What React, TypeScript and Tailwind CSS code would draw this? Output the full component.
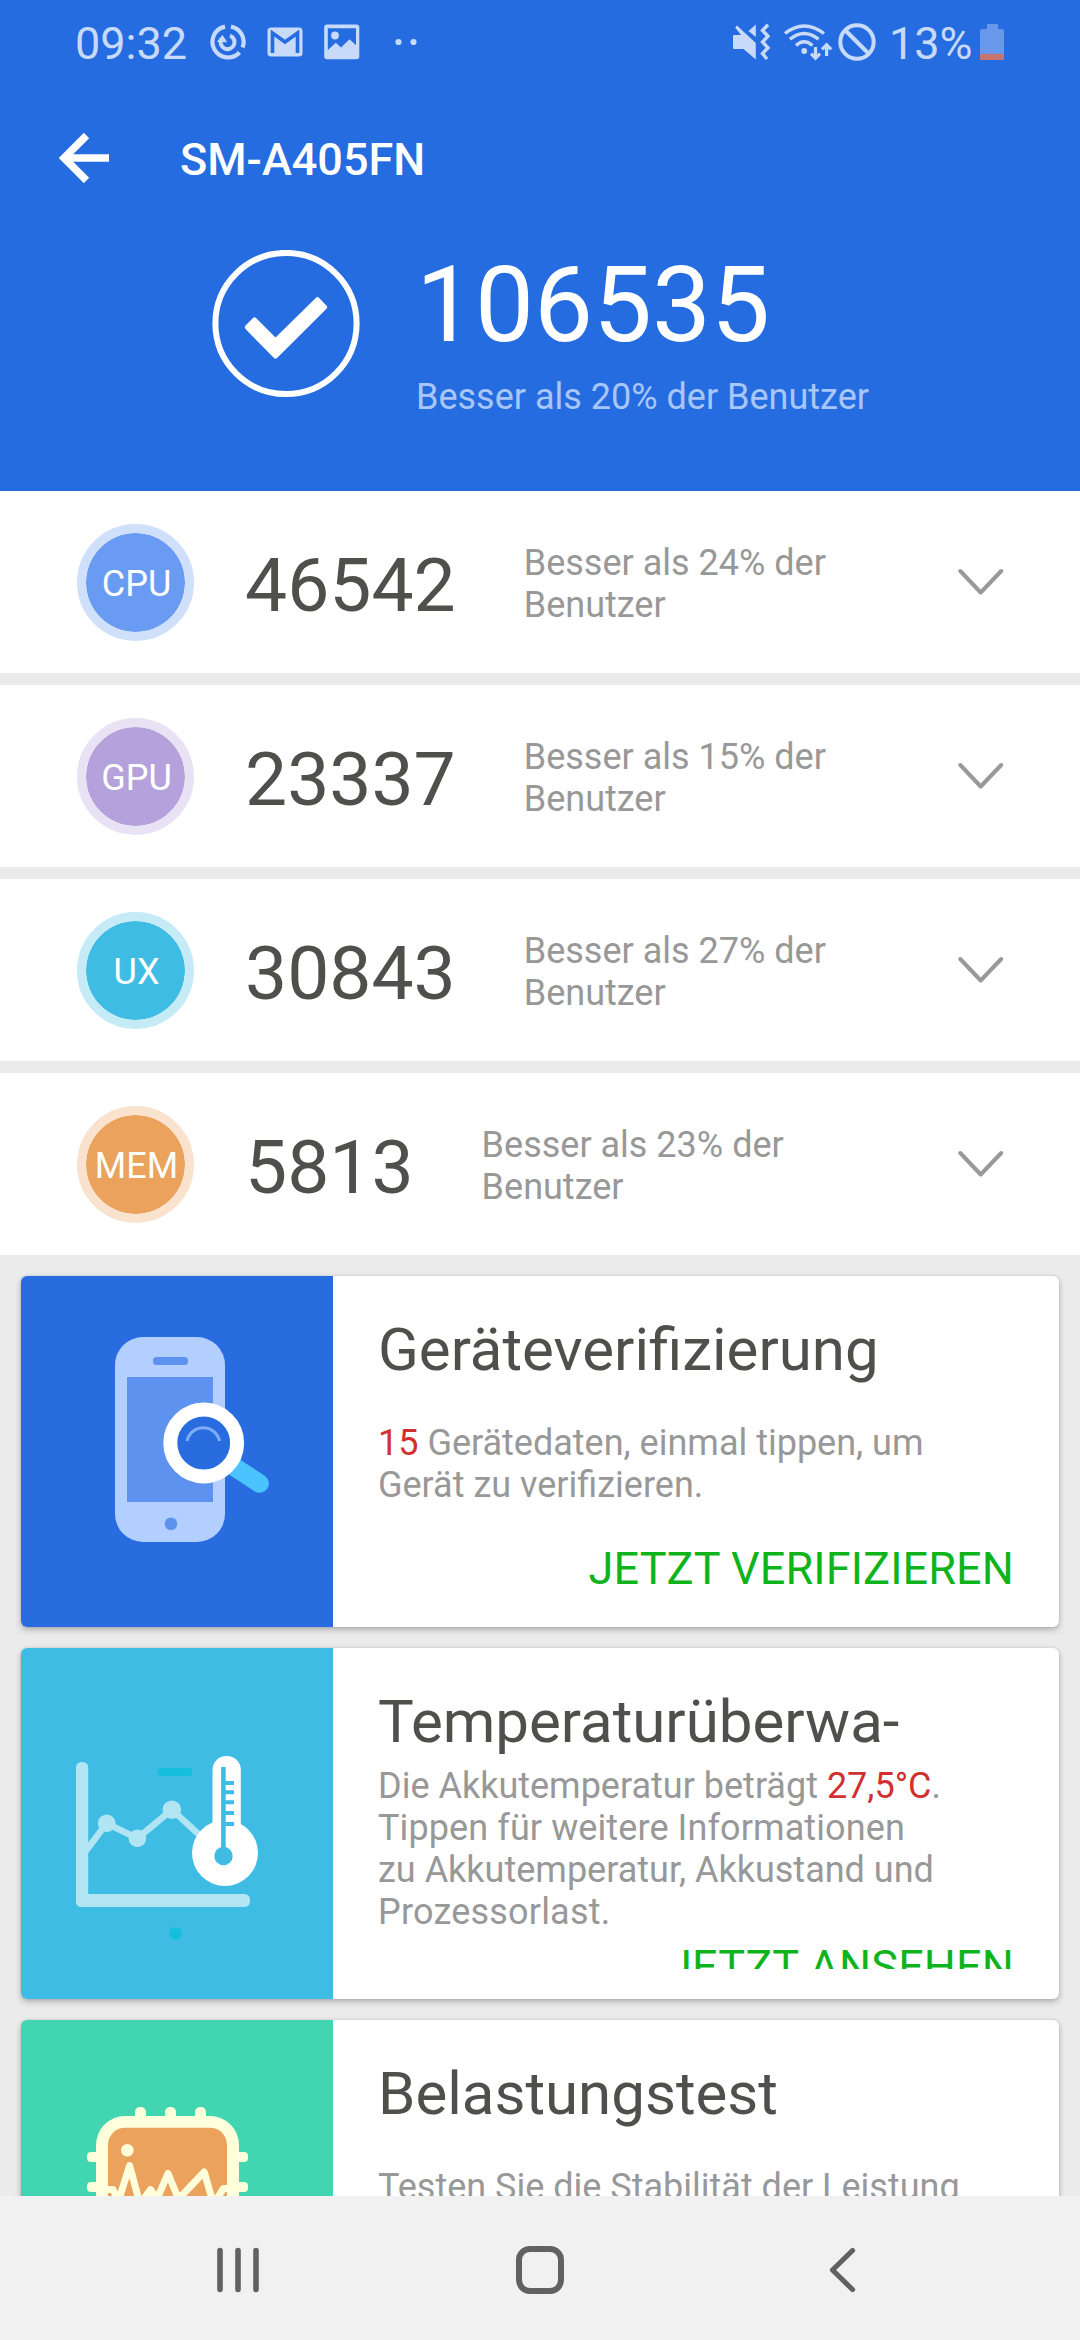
import type { ReactNode } from 'react';

const scores = [
  { label: 'CPU', value: '46542', percent: 24, badge: 'bg-[#6a9bf3] border-[#d0e0fb]' },
  { label: 'GPU', value: '23337', percent: 15, badge: 'bg-[#b5a2dc] border-[#e9e2f5]' },
  { label: 'UX', value: '30843', percent: 27, badge: 'bg-[#3fbce3] border-[#c4ebf6]' },
  { label: 'MEM', value: '5813', percent: 23, badge: 'bg-[#eaa25c] border-[#f9e2ce]' },
];

function StatusBar() {
  return (
    <div className="flex h-[84px] items-center justify-between pl-[75px] pr-[76px] text-[#c8dafa]">
      <div className="flex items-center">
        <span className="w-[134px] pt-[3px] text-[45px] leading-[52px]">09:32</span>
        <svg width="38" height="38" viewBox="0 0 38 38" fill="none" stroke="currentColor">
          <path d="M16 3.6 A15.6 15.6 0 1 0 30.5 29.5" strokeWidth="4.2" />
          <path d="M22 3.6 A15.6 15.6 0 0 1 33.6 24.5" strokeWidth="4.2" />
          <path d="M12.3 16 A7 7 0 1 0 21 12.6" strokeWidth="4" />
          <path d="M8.6 18.6 L13.4 12.6 L17.5 18.8 Z" fill="currentColor" strokeWidth="1" />
        </svg>
        <svg className="ml-5" width="36" height="30" viewBox="0 0 36 30">
          <rect x="0.5" y="0.5" width="35" height="29" rx="3.5" fill="currentColor" />
          <path d="M5.5 26 V6 L18 15 L30.5 6 V26" fill="none" stroke="#256ce0" strokeWidth="3.6" />
        </svg>
        <svg className="ml-[21px]" width="36" height="36" viewBox="0 0 36 36">
          <path fillRule="evenodd" fill="currentColor" d="M3 0.5 H32.5 Q35.3 0.5 35.3 3.3 V32.5 Q35.3 35.3 32.5 35.3 H3 Q0.2 35.3 0.2 32.5 V3.3 Q0.2 0.5 3 0.5 Z M3.8 4.3 V26 L11.8 18.8 L17 23.6 L25.5 15.2 L32 21.3 V4.3 Z" />
          <circle cx="11" cy="11.5" r="3.9" fill="currentColor" />
        </svg>
        <svg className="ml-[34px]" width="24" height="8" viewBox="0 0 24 8" fill="currentColor">
          <circle cx="4.5" cy="4" r="3.1" />
          <circle cx="19.5" cy="4" r="3.1" />
        </svg>
      </div>
      <div className="flex items-center">
        <svg width="38" height="38" viewBox="0 0 38 38">
          <path d="M2 12 H9 L3.2 4.6 L5 2.6 L23.8 20 V36.5 L11.5 26 H2 Q1 26 1 25 V13 Q1 12 2 12 Z" fill="currentColor" />
          <path d="M16.5 8 L23.8 1.5 V14 Z" fill="currentColor" />
          <path d="M36 1.8 L30.5 7.5 L36 13.2 L30.5 19 L36 24.8 L30.5 30.5 L35 36" fill="none" stroke="currentColor" strokeWidth="3.4" />
        </svg>
        <svg className="ml-[13px]" width="50" height="38" viewBox="0 0 50 38" fill="none" stroke="currentColor">
          <path d="M2 10.5 Q21 -4.5 41 10.5" strokeWidth="3.4" />
          <path d="M7 16.3 Q21 4.5 35.5 16.3" strokeWidth="3.4" />
          <path d="M13 22.5 Q21 15 29.5 22.5" strokeWidth="3.4" />
          <circle cx="21.2" cy="28" r="2.9" fill="currentColor" stroke="none" />
          <path d="M32.5 24 V35 M28 30.7 L32.5 35.2 L37 30.7" strokeWidth="3.2" />
          <path d="M43.6 33 V22 M39 26.3 L43.6 21.8 L48.2 26.3" strokeWidth="3.2" />
        </svg>
        <svg className="ml-[5px]" width="38" height="38" viewBox="0 0 38 38" fill="none" stroke="currentColor" strokeWidth="4">
          <circle cx="19" cy="19" r="16.7" />
          <path d="M7.5 7.5 L30.5 30.5" />
        </svg>
        <span className="ml-[13px] w-[91px] whitespace-nowrap pt-[3px] text-[45px] leading-[52px]">13%</span>
        <svg width="24" height="36" viewBox="0 0 24 36">
          <path d="M7 0 H18 V5 H22 Q24 5 24 7 V30 H0 V7 Q0 5 2 5 H7 Z" fill="#6998ea" />
          <path d="M0 30 H24 V34.5 Q24 36 22.5 36 H1.5 Q0 36 0 34.5 Z" fill="#c8746e" />
        </svg>
      </div>
    </div>
  );
}

function Header() {
  return (
    <header className="h-[491px] shrink-0 bg-[#256ce0] text-white">
      <StatusBar />
      <div className="flex h-[148px] items-center pl-[59px]">
        <svg width="50" height="50" viewBox="0 0 50 50" fill="none" stroke="currentColor" strokeWidth="7.6">
          <path d="M4.5 25 H50" />
          <path d="M27.5 2.5 L5 25 L27.5 47.5" />
        </svg>
        <h1 className="ml-[71px] pt-1 text-[45px] font-medium leading-[52px]">SM-A405FN</h1>
      </div>
      <div className="flex pl-[212px] pt-[18px]">
        <svg width="148" height="148" viewBox="0 0 148 148">
          <circle cx="74" cy="73.5" r="70.6" fill="none" stroke="currentColor" strokeWidth="6" />
          <path d="M34 75 L41 68 Q42.5 66.5 44 68 L63.5 87.5 L104 47.8 Q105.5 46.3 107 47.8 L114.5 55.8 Q116 57.3 114.5 58.8 L65 108 Q63.5 109.5 62 108 L34 79.5 Q31.5 77.3 34 75 Z" fill="currentColor" />
        </svg>
        <div className="ml-14 pt-0.5">
          <div className="text-[105px] leading-[108px]">106535</div>
          <div className="mt-4 text-[36px] leading-[42px] text-[#a8c6f8]">Besser als 20% der Benutzer</div>
        </div>
      </div>
    </header>
  );
}

function ScoreRow({ label, value, percent, badge }: (typeof scores)[number]) {
  return (
    <div className="flex h-[182px] items-center bg-white pl-[77px] pr-[76px]">
      <div className={`flex size-[117px] shrink-0 items-center justify-center rounded-full border-[9px] bg-clip-padding pl-0.5 pt-[3px] text-[36px] leading-[42px] text-white ${badge}`}>
        {label}
      </div>
      <div className="ml-[51px] pt-1.5 text-[75px] leading-[88px] text-[#4f504c]">{value}</div>
      <p className="ml-[68px] w-[330px] pt-[3px] text-[36px] leading-[42px] text-[#989898]">Besser als {percent}% der Benutzer</p>
      <svg className="ml-auto" width="48" height="30" viewBox="0 0 48 30" fill="none" stroke="#999" strokeWidth="4" strokeLinecap="round" strokeLinejoin="round">
        <path d="M4.3 4 L24.7 25.5 L45.2 4" />
      </svg>
    </div>
  );
}

function PhoneArt() {
  return (
    <svg width="312" height="351" viewBox="0 0 312 351">
      <rect x="94" y="61" width="110" height="205" rx="28" fill="#b3cfff" />
      <rect x="132" y="81" width="35" height="8" rx="3.5" fill="#5d93ee" />
      <rect x="106" y="101" width="86" height="125" fill="#5d93ee" />
      <circle cx="150" cy="247.7" r="6.3" fill="#5d93ee" />
      <path d="M213 190.7 L238.6 207.5" stroke="#4bc3ff" strokeWidth="18.5" strokeLinecap="round" />
      <circle cx="182.7" cy="167" r="33.4" fill="#286ce0" stroke="#fff" strokeWidth="14" />
      <path d="M166 165 A16.6 16.6 0 0 1 198.5 165" fill="none" stroke="#7fabf7" strokeWidth="3" />
    </svg>
  );
}

function ThermometerArt() {
  return (
    <svg width="312" height="351" viewBox="0 0 312 351">
      <g fill="#b1e5f3">
        <rect x="55" y="114" width="12.2" height="145" rx="5.5" />
        <rect x="55" y="246" width="174" height="13" rx="5.5" />
        <circle cx="85.7" cy="175.3" r="8.8" />
        <circle cx="116.4" cy="190.3" r="8.8" />
        <circle cx="150.8" cy="161.7" r="9.3" />
        <path d="M64 204 L85.7 175.3 L116.4 190.3 L150.8 161.7 L184 192" fill="none" stroke="#b1e5f3" strokeWidth="6.5" />
      </g>
      <rect x="136.5" y="120" width="35" height="8" rx="3.5" fill="#14bfde" />
      <circle cx="154.6" cy="285.3" r="6.3" fill="#14bfde" />
      <rect x="191.5" y="108" width="28.3" height="90" rx="14" fill="#fff" />
      <circle cx="204" cy="205" r="33" fill="#fff" />
      <circle cx="202.5" cy="208" r="9.2" fill="#3fbce3" />
      <path d="M202.4 119 V208" stroke="#3fbce3" strokeWidth="4.6" />
      <path d="M201 135 H213 M201 144.2 H213 M201 154.2 H213 M201 165 H213 M201 176 H213" stroke="#3fbce3" strokeWidth="4" />
    </svg>
  );
}

function ChipArt() {
  return (
    <svg width="312" height="351" viewBox="0 0 312 351">
      <g fill="#ffffdb">
        <rect x="114" y="87" width="11" height="30" rx="5" />
        <rect x="144" y="87" width="11" height="30" rx="5" />
        <rect x="174" y="87" width="11" height="30" rx="5" />
        <rect x="66" y="132" width="161" height="10" rx="4" />
        <rect x="66" y="162" width="161" height="10" rx="4" />
        <rect x="75" y="96" width="143" height="143" rx="29" />
      </g>
      <rect x="87" y="107.7" width="119" height="120" rx="17" fill="#eaa25c" />
      <circle cx="106.3" cy="130.3" r="6.3" fill="#ffffdb" />
      <path d="M86 169.5 H92 L97.5 181 L108.6 145.5 L119 184 L129.5 169.5 L136 179 L147 153.5 L157.5 179 L183.2 152 L192.5 184 L202.5 168.5 H208" fill="none" stroke="#ffffdb" strokeWidth="7" strokeLinecap="round" strokeLinejoin="round" />
    </svg>
  );
}

interface CardProps {
  title: string;
  action?: string;
  color: string;
  art: ReactNode;
  children: ReactNode;
}

function FeatureCard({ title, action, color, art, children }: CardProps) {
  return (
    <article className="flex h-[351px] shrink-0 overflow-hidden rounded-md bg-white shadow-[0_3px_6px_rgba(0,0,0,0.24),0_0_3px_rgba(0,0,0,0.12)]">
      <div className={`w-[312px] shrink-0 ${color}`}>{art}</div>
      <div className="my-[30px] flex min-w-0 flex-1 flex-col overflow-hidden px-[45px]">
        <h2 className="mt-2 shrink-0 whitespace-nowrap text-[60px] leading-[71px] text-[#4f504c]">{title}</h2>
        <div className="flex shrink-0 grow flex-col justify-center py-2">
          <p className="min-h-[84px] whitespace-nowrap text-[36px] leading-[42px] text-[#989898]">{children}</p>
        </div>
        <div className="h-[54px] shrink-0 text-right text-[45px] leading-[52px] tracking-[0.12px] text-[#0fb41c]">{action}</div>
      </div>
    </article>
  );
}

function NavBar() {
  return (
    <nav className="flex h-36 shrink-0 items-center justify-between bg-[#f1f1f1] px-[214px] pb-[1px] pt-1">
      <svg width="48" height="48" viewBox="0 0 48 48" stroke="#616161" strokeWidth="5.6" strokeLinecap="round">
        <path d="M6 4.5 V43.5 M24 4.5 V43.5 M42 4.5 V43.5" />
      </svg>
      <svg width="48" height="48" viewBox="0 0 48 48" fill="none" stroke="#616161" strokeWidth="6">
        <rect x="3" y="3" width="42" height="42" rx="11" />
      </svg>
      <svg width="48" height="48" viewBox="0 0 48 48" fill="none" stroke="#616161" strokeWidth="5.2" strokeLinecap="round" strokeLinejoin="round">
        <path d="M34.5 4.5 L14.5 24 L34.5 43.5" />
      </svg>
    </nav>
  );
}

export default function App() {
  return (
    <div className="flex h-[2340px] w-[1080px] flex-col overflow-hidden bg-[#ebebeb] font-[Roboto,sans-serif]">
      <Header />
      <main className="min-h-0 flex-1 overflow-hidden">
        <section className="flex flex-col gap-3">
          {scores.map(s => <ScoreRow key={s.label} {...s} />)}
        </section>
        <section className="flex flex-col gap-[21px] p-[21px]">
          <FeatureCard title="Geräteverifizierung" action="JETZT VERIFIZIEREN" color="bg-[#286ce0]" art={<PhoneArt />}>
            <span className="text-[#d03030]">15</span> Gerätedaten, einmal tippen, um<br />
            Gerät zu verifizieren.
          </FeatureCard>
          <FeatureCard title="Temperaturüberwa-" action="JETZT ANSEHEN" color="bg-[#3fbce3]" art={<ThermometerArt />}>
            Die Akkutemperatur beträgt <span className="text-[#d03030]">27,5°C</span>.<br />
            <span className="tracking-[0.1px]">Tippen für weitere Informationen</span><br />
            zu Akkutemperatur, Akkustand und<br />
            <span className="tracking-[0.2px]">Prozessorlast.</span>
          </FeatureCard>
          <FeatureCard title="Belastungstest" color="bg-[#41d6b1]" art={<ChipArt />}>
            Testen Sie die Stabilität der Leistung
          </FeatureCard>
        </section>
      </main>
      <NavBar />
    </div>
  );
}
